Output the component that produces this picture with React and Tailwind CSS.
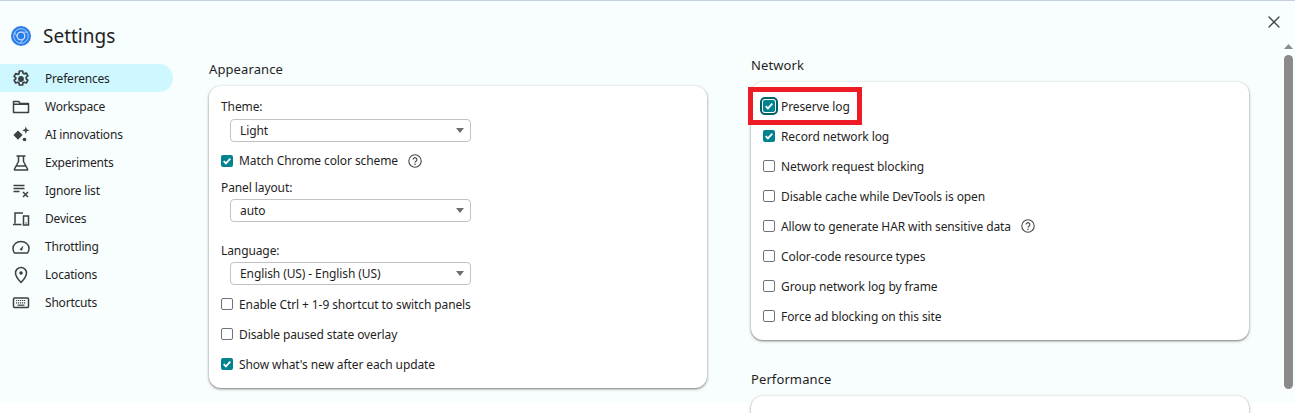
import { X } from "lucide-react";

const navIcons = {
  Preferences: (
    <>
      <path d="M8.400 2h3.200l.4 2.200 1.200.6 2.100-.8 1.600 2.800-1.700 1.400v1.600l1.700 1.400-1.600 2.800-2.100-.8-1.200.6-.4 2.200H8.400L8 13.800l-1.200-.6-2.100.8-1.600-2.800 1.700-1.400V8.800L3.100 7.400 4.700 4.600l2.100.8L8 4.800z" fill="none" stroke="#3c4043" strokeWidth="1.700" strokeLinejoin="round" />
      <circle cx="10" cy="10" r="2.900" fill="#3c4043" />
    </>
  ),
  Workspace: (
    <path d="M2.500 15.500v-11h5.200l1.600 2h8.200v9zM2.500 7.200h15" fill="none" stroke="#3c4043" strokeWidth="1.500" strokeLinejoin="round" />
  ),
  "AI innovations": (
    <>
      <path d="M7 5.500l4.600 4.600L7 14.700 2.400 10.100z" fill="#3c4043" />
      <path d="M14.800 1.500l1 2.700 2.700 1-2.700 1-1 2.700-1-2.700-2.700-1 2.700-1z" fill="#3c4043" />
      <circle cx="13.500" cy="14.500" r="1.800" fill="#3c4043" />
    </>
  ),
  Experiments: (
    <path d="M5.500 3h9M7.500 3v5.500L3.500 16q-.4 1 .6 1h11.800q1 0 .6-1l-4-7.500V3M5.500 13h9" fill="none" stroke="#3c4043" strokeWidth="1.500" strokeLinejoin="round" />
  ),
  "Ignore list": (
    <path d="M2.500 4.500h11M2.500 7.500h11M2.500 10.500h6M12 11l5 5M17 11l-5 5" fill="none" stroke="#3c4043" strokeWidth="1.500" />
  ),
  Devices: (
    <path d="M4 14.500V4h8M2 15.500h8.500M12.500 7h5v9h-5zM14.500 14h1" fill="none" stroke="#3c4043" strokeWidth="1.500" />
  ),
  Throttling: (
    <>
      <path d="M3.500 16q-1.500-1.800-1.500-4.500C2 7.500 5.500 4.500 10 4.500s8 3 8 7q0 2.700-1.500 4.500z" fill="none" stroke="#3c4043" strokeWidth="1.500" strokeLinejoin="round" />
      <path d="M8.500 12.500l4-4-1.500 5.300z" fill="#3c4043" />
    </>
  ),
  Locations: (
    <>
      <path d="M10 17.500Q4.500 11.800 4.500 8a5.500 5.500 0 0 1 11 0q0 3.800-5.500 9.500z" fill="none" stroke="#3c4043" strokeWidth="1.500" strokeLinejoin="round" />
      <circle cx="10" cy="8" r="1.800" fill="#3c4043" />
    </>
  ),
  Shortcuts: (
    <>
      <rect x="2.500" y="5" width="15" height="9.500" rx="1" fill="none" stroke="#3c4043" strokeWidth="1.500" />
      <path d="M5 7.500h10M5 9.800h10" stroke="#3c4043" strokeWidth="1.200" strokeDasharray="1.200 .8" />
      <path d="M6.500 12.200h7" stroke="#3c4043" strokeWidth="1.200" />
    </>
  ),
};

const navItems = Object.keys(navIcons);

const networkRows = [
  { label: "Preserve log", checked: true, focused: true },
  { label: "Record network log", checked: true },
  { label: "Network request blocking" },
  { label: "Disable cache while DevTools is open" },
  { label: "Allow to generate HAR with sensitive data", help: true },
  { label: "Color-code resource types" },
  { label: "Group network log by frame" },
  { label: "Force ad blocking on this site" },
];

function Checkbox({ checked, focused }) {
  return (
    <span
      className={`flex h-[12px] w-[12px] shrink-0 items-center justify-center rounded-[2px] ${
        checked ? "bg-[#00838f]" : "border border-[#6f7377] bg-white"
      } ${focused ? "outline-2 outline-offset-[1px] outline-[#00616b]" : ""}`}
    >
      {checked && (
        <svg width="10" height="10" viewBox="0 0 10 10">
          <path d="M1.700 5.200l2.200 2.200L8.300 2.700" fill="none" stroke="#fff" strokeWidth="1.800" />
        </svg>
      )}
    </span>
  );
}

function Help() {
  return (
    <svg width="14" height="14" viewBox="0 0 14 14" className="ml-[4px]">
      <circle cx="7" cy="7" r="6.200" fill="none" stroke="#474747" strokeWidth="1.100" />
      <path d="M5.100 5.600a1.900 1.900 0 1 1 2.900 1.600Q7 7.800 7 8.600" fill="none" stroke="#474747" strokeWidth="1.100" />
      <circle cx="7" cy="10.300" r=".8" fill="#474747" />
    </svg>
  );
}

function CheckRow({ label, checked, focused, help, height = "h-[30px]" }) {
  return (
    <div className={`flex items-center gap-[6px] ${height}`}>
      <Checkbox checked={checked} focused={focused} />
      <span className="pt-px">{label}</span>
      {help && <Help />}
    </div>
  );
}

function Select({ value }) {
  return (
    <div className="ml-[9px] flex h-[23px] w-[241px] items-center justify-between rounded-[4px] border border-[#bfc3c6] bg-white pl-[9px] pr-[6px]">
      <span>{value}</span>
      <svg width="8" height="5" viewBox="0 0 8 5">
        <path d="M0 0h8L4 5z" fill="#6b6f73" />
      </svg>
    </div>
  );
}

const cardShadow = "shadow-[0_1px_3px_1px_rgba(0,0,0,0.12),0_1px_2px_rgba(0,0,0,0.4)]";

export default function App() {
  return (
    <div className="h-[413px] w-full overflow-hidden bg-white text-[12px] tracking-[-0.1px] text-[#1f1f1f] [font-family:'Noto_Sans','Noto_Sans_CJK_KR',sans-serif]">
      <div className="relative flex h-[402px] border-t border-[#c5d0e4] bg-[#f8fdfe]">
        <aside className="w-[173px] shrink-0">
          <div className="flex h-[63px] items-start pl-[11px] pt-[25px]">
            <svg width="20" height="20" viewBox="0 0 20 20">
              <circle cx="10" cy="10" r="10" fill="#2a7de9" />
              <circle cx="10" cy="10" r="7.300" fill="none" stroke="#a9cdf8" strokeWidth="1" />
              <circle cx="10" cy="10" r="3.800" fill="none" stroke="#cfe3fc" strokeWidth="1.300" />
              <path d="M10 6.200h7M6.700 11.900L3.500 6M13.300 11.900L9.500 17" stroke="#a9cdf8" strokeWidth="1" />
            </svg>
            <span className="-mt-px ml-[12px] text-[19px] leading-[22px] tracking-normal text-[#1f1f1f]">Settings</span>
          </div>
          <nav className="tracking-[-0.2px]">
            {navItems.map((item, i) => (
              <div
                key={item}
                className={`flex h-[28px] items-center rounded-r-full pl-[11px] pt-[2px] ${i === 0 ? "bg-[#cff7ff]" : ""}`}
              >
                <svg width="20" height="20" viewBox="0 0 20 20" className="shrink-0">
                  {navIcons[item]}
                </svg>
                <span className="ml-[14px]">{item}</span>
              </div>
            ))}
          </nav>
        </aside>

        <main className="flex min-w-0 flex-1 items-start gap-[44px] pl-[36px]">
          <section className="w-[498px] shrink-0 pt-[59px]">
            <h2 className="h-[26px] text-[13px] leading-[18px] tracking-[0.1px]">Appearance</h2>
            <div className={`h-[302px] rounded-[12px] bg-white px-[12px] pt-[12px] ${cardShadow}`}>
              <div className="h-[21px] leading-[18px]">Theme:</div>
              <Select value="Light" />
              <CheckRow label="Match Chrome color scheme" checked help height="h-[37px]" />
              <div className="h-[20px] pt-px leading-[16px]">Panel layout:</div>
              <Select value="auto" />
              <div className="h-[40px] pt-[20px] leading-[18px]">Language:</div>
              <Select value="English (US) - English (US)" />
              <div className="h-[4px]" />
              <CheckRow label="Enable Ctrl + 1-9 shortcut to switch panels" />
              <CheckRow label="Disable paused state overlay" />
              <CheckRow label="Show what's new after each update" checked />
            </div>
          </section>

          <section className="w-[498px] shrink-0 pt-[55px]">
            <h2 className="h-[26px] text-[13px] leading-[18px] tracking-[0.1px]">Network</h2>
            <div className={`relative h-[258px] rounded-[12px] bg-white pl-[12px] pt-[9px] ${cardShadow}`}>
              {networkRows.map((row) => (
                <CheckRow key={row.label} {...row} />
              ))}
              <div className="absolute left-[-3px] top-[5px] h-[38px] w-[114px] border-[5px] border-[#ed1c24]" />
            </div>
            <h2 className="mt-[30px] h-[26px] text-[13px] leading-[18px] tracking-[0.1px]">Performance</h2>
            <div className={`h-[40px] rounded-[12px] bg-white ${cardShadow}`} />
          </section>
        </main>

        <div className="flex w-[12px] shrink-0 flex-col items-center pr-[2px] pt-[43px]">
          <svg width="9" height="6" viewBox="0 0 9 6">
            <path d="M4.500 0L9 5H0z" fill="#8a8a8a" />
          </svg>
          <div className="mt-[5px] h-[334px] w-[9px] rounded-full bg-[#8a8a8a]" />
        </div>

        <X size={20} strokeWidth={1.500} color="#3c4043" className="absolute left-[1264px] top-[11px]" />
      </div>
    </div>
  );
}
